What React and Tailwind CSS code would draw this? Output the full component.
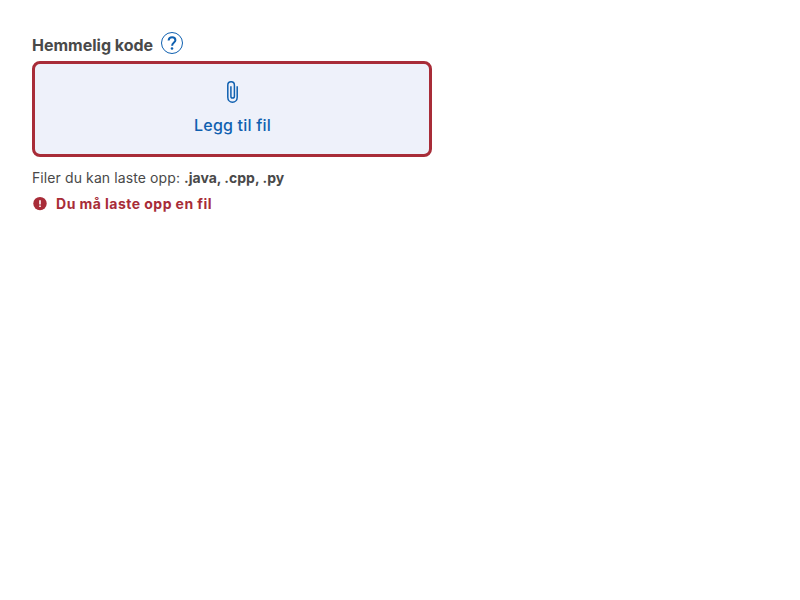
export default function App() {
  return (
    <main className="px-8 pt-8 font-['Inter',sans-serif] text-[#494949]">
      <div className="w-[400px]">
        <div className="flex h-[29px] items-start gap-2">
          <label className="pt-[2px] text-base leading-[22px] font-bold">Hemmelig kode</label>
          <button aria-label="Hjelp" className="size-[22px] text-[#0f60b0]">
            <svg viewBox="0 0 22 22" className="size-[22px]" fill="none" stroke="currentColor">
              <circle cx="11" cy="11" r="10.5" />
              <path d="M7.600 8.500C7.800 6.500 9.100 5.300 11.100 5.300C13.100 5.300 14.400 6.500 14.400 8.200C14.400 10.500 11.100 10.600 11.100 13.700" strokeWidth="2" />
              <circle cx="11" cy="16.500" r="1.300" fill="currentColor" stroke="none" />
            </svg>
          </button>
        </div>
        <button className="flex h-24 w-full flex-col items-center rounded-lg border-[3px] border-[#a82c38] bg-[#eef1fa] pt-4 text-[#0f60b0]">
          <svg viewBox="0 0 24 24" className="size-6" fill="none" stroke="currentColor" strokeWidth="1.5">
            <path d="M17.200 6.200V17.200C17.200 20.200 15.100 22.200 12.500 22.200S7.800 20.200 7.800 17.200V5.200C7.800 3.200 9.200 1.800 11.100 1.800S14.400 3.200 14.400 5.200V16.200C14.400 17.300 13.600 18.100 12.600 18.100S10.900 17.300 10.900 16.200V6.200" />
          </svg>
          <span className="mt-[9px] pl-px text-base leading-6 font-medium tracking-[0.2px]">Legg til fil</span>
        </button>
        <p className="mt-[10px] text-sm leading-[22px]">
          <span className="tracking-[0.100px]">Filer du kan laste opp: </span>
          <b className="font-bold">.java, .cpp, .py</b>
        </p>
        <div className="mt-1 flex h-[22px] items-center gap-2 text-[#a82c38]">
          <svg viewBox="0 0 16 16" className="size-4" fill="currentColor">
            <circle cx="8" cy="7.600" r="6.700" />
            <path d="M7.200 4.200h1.600v4.200H7.200ZM7.200 9.600h1.600v1.500H7.200Z" fill="white" />
          </svg>
          <p className="text-sm leading-[22px] font-bold tracking-[0.540px] [word-spacing:-0.35px]">Du må laste opp en fil</p>
        </div>
      </div>
    </main>
  );
}
